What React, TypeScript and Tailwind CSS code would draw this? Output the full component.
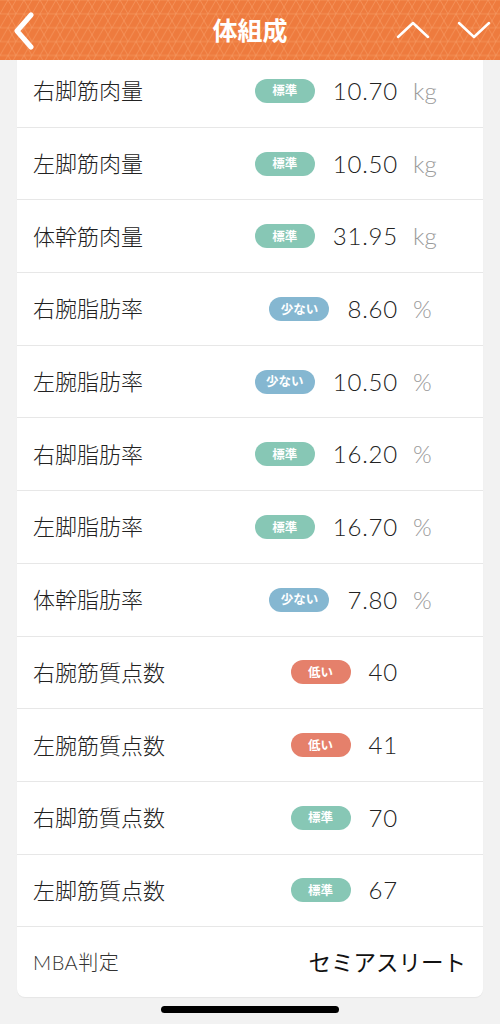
type Level = 'std' | 'low' | 'few';

type Row = { label: string; level: Level; value: string; unit?: string };

const rows: Row[] = [
  { label: '右脚筋肉量', level: 'std', value: '10.70', unit: 'kg' },
  { label: '左脚筋肉量', level: 'std', value: '10.50', unit: 'kg' },
  { label: '体幹筋肉量', level: 'std', value: '31.95', unit: 'kg' },
  { label: '右腕脂肪率', level: 'few', value: '8.60', unit: '%' },
  { label: '左腕脂肪率', level: 'few', value: '10.50', unit: '%' },
  { label: '右脚脂肪率', level: 'std', value: '16.20', unit: '%' },
  { label: '左脚脂肪率', level: 'std', value: '16.70', unit: '%' },
  { label: '体幹脂肪率', level: 'few', value: '7.80', unit: '%' },
  { label: '右腕筋質点数', level: 'low', value: '40' },
  { label: '左腕筋質点数', level: 'low', value: '41' },
  { label: '右脚筋質点数', level: 'std', value: '70' },
  { label: '左脚筋質点数', level: 'std', value: '67' },
];

const badge: Record<Level, { text: string; cls: string }> = {
  std: { text: '標準', cls: 'bg-[#87c7b5]' },
  few: { text: '少ない', cls: 'bg-[#85b7d1]' },
  low: { text: '低い', cls: 'bg-[#e5806b]' },
};

const jp = "font-['Noto_Sans_CJK_JP',sans-serif]";
const num = "font-['Lato','Noto_Sans_CJK_JP',sans-serif]";

function Header() {
  return (
    <header className="relative z-10 h-[60px] bg-[#ee7b3e] overflow-hidden">
      {/* triangle texture */}
      <svg className="absolute inset-0 w-full h-full" aria-hidden>
        <defs>
          <pattern id="tri" width="16" height="13.86" patternUnits="userSpaceOnUse">
            <path
              d="M0 0H16M0 13.86H16M0 13.86L8 0L16 13.86M-8 0L0 13.86M8 13.86L16 0L24 13.86"
              stroke="#f7a06b"
              strokeWidth="0.9"
              fill="none"
              opacity="0.6"
            />
          </pattern>
        </defs>
        <rect width="100%" height="100%" fill="url(#tri)" />
      </svg>
      <div className="relative flex items-center h-full">
        <svg width="26" height="40" viewBox="0 0 26 40" className="ml-[11px]">
          <path d="M20 5L6 21L20 37" stroke="white" strokeWidth="5" fill="none" strokeLinecap="round" strokeLinejoin="round" />
        </svg>
        <h1 className={`absolute left-0 right-0 text-center text-white text-[25px] font-bold ${jp}`}>体組成</h1>
        <div className="ml-auto flex items-center gap-[27px] mr-[9px]">
          <svg width="34" height="20" viewBox="0 0 34 20">
            <path d="M2 17L17 3L32 17" stroke="white" strokeWidth="2.5" fill="none" strokeLinecap="round" strokeLinejoin="round" />
          </svg>
          <svg width="34" height="20" viewBox="0 0 34 20">
            <path d="M2 3L17 17L32 3" stroke="white" strokeWidth="2.5" fill="none" strokeLinecap="round" strokeLinejoin="round" />
          </svg>
        </div>
      </div>
    </header>
  );
}

function DataRow({ row }: { row: Row }) {
  const b = badge[row.level];
  return (
    <div className="h-[72.7px] flex items-center pl-[16px] pr-[16px] border-b border-[#e7e7e7]">
      <span className={`text-[22px] text-[#222] font-light leading-none -mt-[3px] ${jp}`}>{row.label}</span>
      <div className="ml-auto flex items-center">
        <span className={`w-[60px] h-[24px] rounded-full flex items-center justify-center text-white text-[12.5px] font-bold ${b.cls} ${jp}`}>
          {b.text}
        </span>
        <span className={`ml-[18px] text-[24px] font-light tracking-[0.8px] text-[#222] leading-none ${num}`}>{row.value}</span>
        <span className={`w-[54px] ml-[15px] text-[24px] font-light text-[#9a9a9a] leading-none ${num}`}>{row.unit ?? ''}</span>
      </div>
    </div>
  );
}

export default function App() {
  return (
    <div className="w-[500px] h-[1024px] bg-[#f2f2f2] overflow-hidden flex flex-col">
      <Header />
      <main className="-mt-[5px] px-[17px]">
        <div className="bg-white rounded-b-[8px] shadow-[0_1px_1px_rgba(0,0,0,0.05)]">
          {rows.map((r) => (
            <DataRow key={r.label} row={r} />
          ))}
          <div className="h-[70px] flex items-center pl-[16px] pr-[17px]">
            <span className={`text-[20px] text-[#333] font-light tracking-[0.5px] ${num}`}>MBA判定</span>
            <span className={`ml-auto text-[22.5px] text-[#111] ${jp}`}>セミアスリート</span>
          </div>
        </div>
      </main>
      <div className="mt-[9px] flex justify-center">
        <div className="w-[178px] h-[7px] rounded-full bg-black" />
      </div>
    </div>
  );
}
